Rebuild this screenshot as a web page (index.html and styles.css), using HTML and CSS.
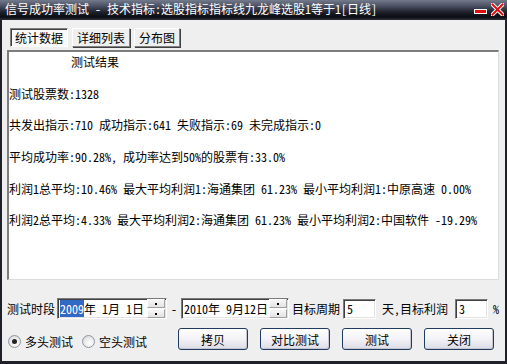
FILE: index.html
```html
<!DOCTYPE html>
<html lang="zh-CN">
<head>
    <meta charset="UTF-8">
    <meta name="viewport" content="width=device-width, initial-scale=1.0">
    <title>信号成功率测试</title>
    <link rel="stylesheet" href="styles.css">
</head>
<body>
  <div class="window">
    <div class="titlebar">
      <span class="title">信号成功率测试 - 技术指标:选股指标指标线九龙峰选股1等于1[日线]</span>
      <div class="ctrls">
        <svg class="ico-min" width="13" height="6" viewBox="0 0 13 6">
          <rect x="0.5" y="0.5" width="12" height="4" fill="#e01010" stroke="#fff" stroke-width="1"/>
        </svg>
        <svg class="ico-close" width="13" height="13" viewBox="0 0 13 13">
          <path d="M1.5 1.5 L11.5 11.5 M11.5 1.5 L1.5 11.5" stroke="#fff" stroke-width="4" stroke-linecap="square"/>
          <path d="M1.5 1.5 L11.5 11.5 M11.5 1.5 L1.5 11.5" stroke="#e01010" stroke-width="2" stroke-linecap="square"/>
        </svg>
      </div>
    </div>

    <div class="content">
      <div class="tabs">
        <div class="tab active">统计数据</div>
        <div class="tab">详细列表</div>
        <div class="tab">分布图</div>
      </div>

      <div class="report">
        <div class="line heading">测试结果</div>
        <div class="line">测试股票数:1328</div>
        <div class="line">共发出指示:710 成功指示:641 失败指示:69 未完成指示:0</div>
        <div class="line">平均成功率:90.28%, 成功率达到50%的股票有:33.0%</div>
        <div class="line">利润1总平均:10.46% 最大平均利润1:海通集团 61.23% 最小平均利润1:中原高速 0.00%</div>
        <div class="line">利润2总平均:4.33% 最大平均利润2:海通集团 61.23% 最小平均利润2:中国软件 -19.29%</div>
      </div>

      <div class="params">
        <span class="lbl">测试时段</span>
        <div class="datebox first">
          <span class="val"><span class="sel">2009</span>年 1月 1日</span>
          <div class="spin"><span class="up"></span><span class="down"></span></div>
        </div>
        <span class="dash">-</span>
        <div class="datebox second">
          <span class="val">2010年 9月12日</span>
          <div class="spin"><span class="up"></span><span class="down"></span></div>
        </div>
        <span class="lbl gap3">目标周期</span>
        <div class="numbox">5</div>
        <span class="lbl gap6">天,目标利润</span>
        <div class="numbox far">3</div>
        <span class="pct">%</span>
      </div>

      <div class="actions">
        <label class="radio checked"><span class="dot"></span>多头测试</label>
        <label class="radio"><span class="dot"></span>空头测试</label>
        <div class="buttons">
          <button class="btn">拷贝</button>
          <button class="btn">对比测试</button>
          <button class="btn">测试</button>
          <button class="btn">关闭</button>
        </div>
      </div>
    </div>
  </div>
</body>
</html>
```

FILE: styles.css
```css
* {
    box-sizing: border-box;
}
body {
    margin: 0;
    background-color: #1b1e26;
    font-family: "Noto Sans CJK SC", "DejaVu Sans", sans-serif;
    font-size: 12px;
    font-feature-settings: "hwid" 1;
    color: #000;
}
.window {
    width: 507px;
    height: 364px;
    background-color: #efefef;
    border-left: 2px solid #1e2129;
    border-right: 2px solid #1e2129;
    border-bottom: 3px solid #1e2129;
    display: flex;
    flex-direction: column;
}
.titlebar {
    height: 20px;
    margin: 0 -2px;
    padding: 0 3px 0 5px;
    display: flex;
    align-items: center;
    justify-content: space-between;
    background: linear-gradient(#737a8c 0%, #4b5163 30%, #1f222b 60%, #0b0c12 85%, #2e323c 100%);
    color: #fff;
}
.title {
    white-space: pre;
    line-height: 16px;
    margin-top: -3px;
}
.ctrls {
    display: flex;
    align-items: flex-end;
    gap: 4px;
    margin-top: -2px;
}
.ico-min {
    margin-bottom: 1px;
}
.content {
    flex: 1;
    display: flex;
    flex-direction: column;
}
.tabs {
    display: flex;
    gap: 4px;
    margin: 8px 0 0 8px;
}
.tab {
    height: 19px;
    padding: 0 4px;
    line-height: 17px;
    border: 1px solid;
    border-color: #fff #808080 #808080 #fff;
    box-shadow: 1px 1px 0 #404040;
    background-color: #efefef;
}
.tab.active {
    border-color: #808080 #fff #fff #808080;
    box-shadow: inset 1px 1px 0 #404040;
    background-color: #f9f9f9;
}
.report {
    margin: 3px 0 0 5px;
    width: 492px;
    height: 230px;
    background-color: #fff;
    border-top: 2px solid #7d7d7d;
    border-left: 2px solid #7d7d7d;
    border-right: 1px solid #dcdcdc;
    border-bottom: 1px solid #dcdcdc;
    padding: 1px 0 0 0;
}
.line {
    white-space: pre;
    line-height: 15px;
    height: 31.7px;
    padding-top: 1px;
}
.line.heading {
    padding-left: 62px;
}
.params {
    display: flex;
    align-items: center;
    margin: 18px 0 0 5px;
    height: 21px;
}
.datebox {
    margin-left: 2px;
    height: 21px;
    display: flex;
    align-items: center;
    justify-content: space-between;
    background-color: #fff;
    border: 1px solid;
    border-color: #7a7a7a #fff #fff #7a7a7a;
    box-shadow: inset 1px 1px 0 #404040, inset -1px -1px 0 #e3e3e3;
    padding: 1px 1px 1px 2px;
}
.datebox.first {
    width: 110px;
}
.datebox.second {
    width: 108px;
    margin-left: 4px;
}
.val {
    white-space: pre;
    line-height: 14px;
}
.sel {
    background-color: #316ac5;
    color: #fff;
}
.spin {
    width: 18px;
    height: 19px;
    display: flex;
    flex-direction: column;
    gap: 1px;
}
.spin span {
    flex: 1;
    border: 1px solid;
    border-color: #fff #a0a0a0 #a0a0a0 #fff;
    background: linear-gradient(#f7f7f7, #e3e3e3);
    position: relative;
}
.spin span::after {
    content: "";
    position: absolute;
    left: 7px;
    top: 3px;
    width: 2px;
    height: 2px;
    background-color: #000;
}
.dash {
    margin-left: 4px;
    width: 6px;
}
.gap3 {
    margin-left: 3px;
}
.gap6 {
    margin-left: 6px;
    white-space: pre;
}
.numbox {
    margin-left: 3px;
    width: 33px;
    height: 20px;
    padding: 2px 3px;
    line-height: 14px;
    background-color: #fff;
    border: 1px solid;
    border-color: #7a7a7a #fff #fff #7a7a7a;
    box-shadow: inset 1px 1px 0 #404040, inset -1px -1px 0 #e3e3e3;
}
.numbox.far {
    margin-left: 7px;
}
.pct {
    margin-left: 5px;
}
.actions {
    display: flex;
    align-items: center;
    margin: 9px 0 0 6px;
    height: 22px;
}
.radio {
    display: flex;
    align-items: center;
    gap: 4px;
    margin-right: 9px;
    margin-top: 5px;
}
.radio .dot {
    width: 13px;
    height: 13px;
    border-radius: 50%;
    border: 1px solid #8e96a3;
    background: radial-gradient(circle at 60% 65%, #fff 0%, #e6e6e6 60%, #c8c8c8 100%);
    position: relative;
}
.radio.checked .dot::after {
    content: "";
    position: absolute;
    left: 3px;
    top: 3px;
    width: 5px;
    height: 5px;
    border-radius: 50%;
    background-color: #222;
}
.buttons {
    display: flex;
    gap: 12px;
    margin-left: 22px;
}
.btn {
    width: 70px;
    height: 22px;
    padding: 0;
    font-family: inherit;
    font-size: 12px;
    color: #000;
    border: 1px solid #1f3b5f;
    border-radius: 3px;
    background: linear-gradient(#ffffff 0%, #f4f4f8 45%, #dcdce6 100%);
    box-shadow: inset -1px -1px 0 #c6c6d2;
}
```
